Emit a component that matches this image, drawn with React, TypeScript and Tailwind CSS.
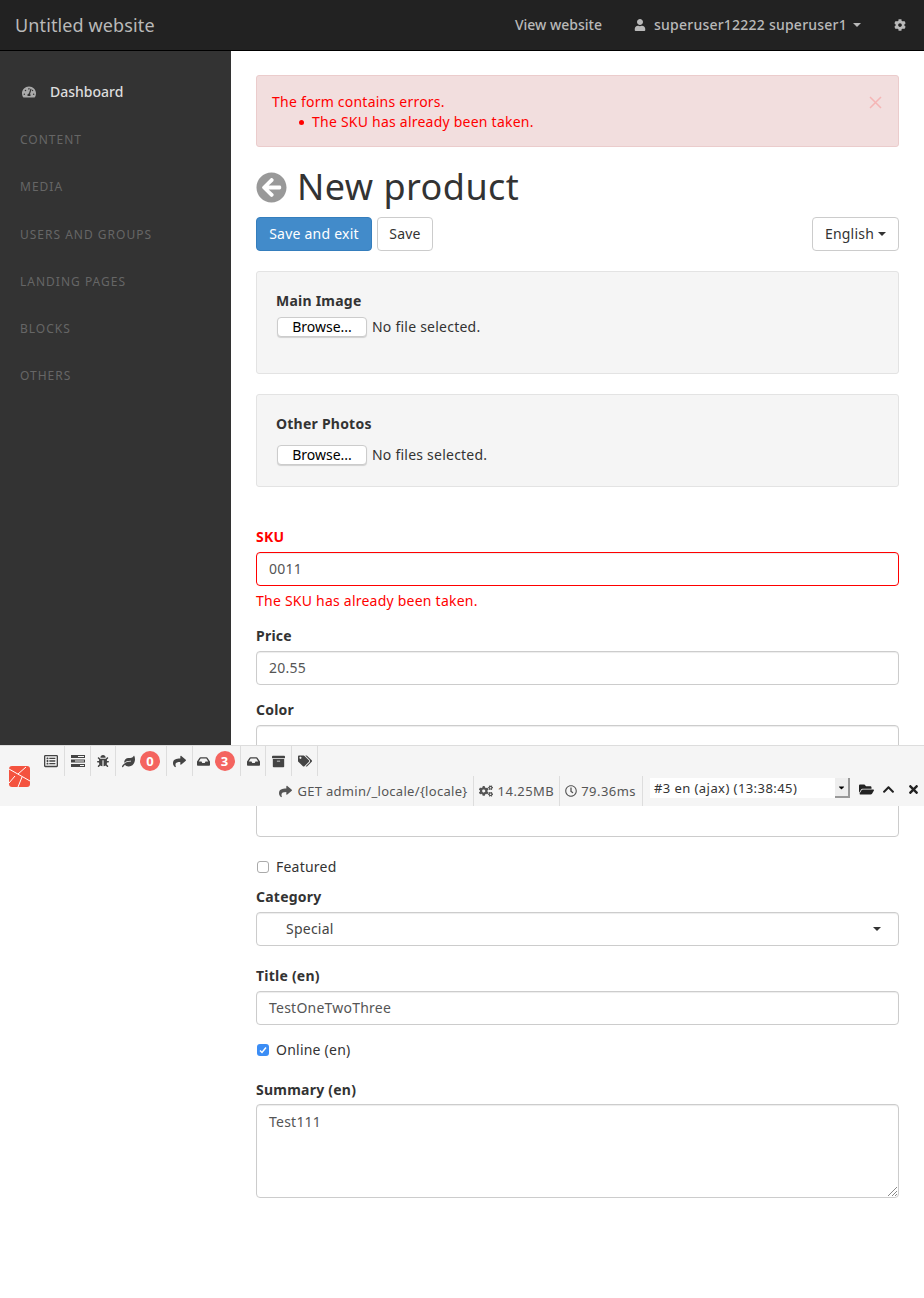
import {
  FaArchive,
  FaArrowCircleLeft,
  FaCaretDown,
  FaChevronUp,
  FaCog,
  FaCogs,
  FaFolderOpen,
  FaBug,
  FaInbox,
  FaLeaf,
  FaRegClock,
  FaRegListAlt,
  FaShare,
  FaTachometerAlt,
  FaTags,
  FaTimes,
  FaUser,
} from "react-icons/fa";

const sections = ["CONTENT", "MEDIA", "USERS AND GROUPS", "LANDING PAGES", "BLOCKS", "OTHERS"];

function Caret({ className }: { className: string }) {
  return <span className={`inline-block h-0 w-0 border-x-4 border-t-4 border-x-transparent ${className}`} />;
}

function Label({ children, danger }: { children: React.ReactNode; danger?: boolean }) {
  return (
    <label className={`mb-[5px] block h-5 font-bold leading-5 ${danger ? "text-[#f00]" : "text-[#333]"}`}>
      {children}
    </label>
  );
}

function TextField({ label, value }: { label: string; value: string }) {
  return (
    <div className="mb-[15px]">
      <Label>{label}</Label>
      <div className="flex h-[34px] items-center rounded border border-[#ccc] bg-white px-3 text-[#555] shadow-[inset_0_1px_1px_rgba(0,0,0,0.075)]">
        {value}
      </div>
    </div>
  );
}

function FileBox({ label, text, className, rowClass }: { label: string; text: string; className: string; rowClass: string }) {
  return (
    <div className={`rounded-[3px] border border-[#e3e3e3] bg-[#f5f5f5] px-[19px] pt-[19px] ${className}`}>
      <div className="h-5 font-bold leading-5 text-[#333]">{label}</div>
      <div className={`ml-px flex items-center gap-[5px] ${rowClass}`}>
        <span className="flex h-[20px] w-[90px] items-center justify-center rounded-[4px] border border-[#ccc] bg-white text-[14px] tracking-normal text-black shadow-[0_1px_1px_rgba(0,0,0,0.15)]">
          Browse...
        </span>
        <span className="text-[#333]">{text}</span>
      </div>
    </div>
  );
}

function BarItem({ children, className = "" }: { children: React.ReactNode; className?: string }) {
  return (
    <div className={`flex h-[30px] items-center justify-center border-r border-[#ddd] ${className}`}>{children}</div>
  );
}

function Badge({ n }: { n: number }) {
  return (
    <span className="ml-[5px] flex h-5 w-5 items-center justify-center rounded-full bg-[#f4645f] text-[13px] font-bold tracking-normal text-white">
      {n}
    </span>
  );
}

function DebugBar() {
  return (
    <div className="absolute left-0 right-0 top-[745px] z-10 h-[61px] border-t border-[#ddd] bg-[#f5f5f5] text-[13px] tracking-[0.3px] text-[#555]">
      <svg className="absolute left-[9px] top-[20px]" width="21" height="21" viewBox="0 0 21 21">
        <rect width="21" height="21" rx="3" fill="#f4533f" />
        <path d="M0 3 L21 15 M9 8 L17 1 M6 10 L0 17 M13 11 L9 21" stroke="#fff" strokeWidth="1" fill="none" />
      </svg>
      <div className="flex h-[30px] pl-[38px] text-[#444]">
        <BarItem className="w-[27px]">
          <FaRegListAlt size={14} />
        </BarItem>
        <BarItem className="w-[26px]">
          <svg width="14" height="12" viewBox="0 0 14 12" fill="currentColor">
            <path d="M0 0h14v3H0zM0 4.500h14v3H0zM0 9h14v3H0z" />
            <path d="M7 1h6v1H7zM4 5.500h9v1H4zM9 10h4v1H9z" fill="#f5f5f5" />
          </svg>
        </BarItem>
        <BarItem className="w-[25px]">
          <FaBug size={12} />
        </BarItem>
        <BarItem className="w-[51px]">
          <FaLeaf size={13} />
          <Badge n={0} />
        </BarItem>
        <BarItem className="w-[26px]">
          <FaShare size={13} />
        </BarItem>
        <BarItem className="w-[48px] pr-[2px]">
          <FaInbox size={13} />
          <Badge n={3} />
        </BarItem>
        <BarItem className="w-[25px]">
          <FaInbox size={13} />
        </BarItem>
        <BarItem className="w-[26px]">
          <FaArchive size={13} />
        </BarItem>
        <BarItem className="w-[26px]">
          <FaTags size={14} />
        </BarItem>
      </div>
      <div className="flex h-[30px] items-center justify-end">
        <div className="flex h-[30px] items-center gap-[5px] border-r border-[#ddd] pr-[5px]">
          <FaShare size={13} />
          <span>GET admin/_locale/&#123;locale&#125;</span>
        </div>
        <div className="flex h-[30px] items-center gap-[5px] border-r border-[#ddd] px-[5px] tracking-[0.45px]">
          <FaCogs size={14} />
          <span>14.25MB</span>
        </div>
        <div className="flex h-[30px] items-center gap-1 border-r border-[#ddd] pl-[5px] pr-[6px] tracking-[0.45px]">
          <FaRegClock size={12} />
          <span>79.36ms</span>
        </div>
        <div className="relative top-[-3px] ml-[7px] flex h-5 w-[200px] items-center justify-between bg-white pl-1 text-[13px] tracking-[0.43px] text-[#333]">
          #3 en (ajax) (13:38:45)
          <span className="flex h-5 w-[15px] items-center justify-center border-b-2 border-r-2 border-[#999] bg-[#eee]">
            <FaCaretDown size={9} className="text-black" />
          </span>
        </div>
        <div className="relative top-[-2px] flex w-[74px] items-center pl-[9px] text-[#222]">
          <FaFolderOpen size={15} />
          <FaChevronUp size={13} className="ml-2" />
          <FaTimes size={13} className="ml-3" />
        </div>
      </div>
    </div>
  );
}

export default function App() {
  return (
    <div className="relative min-h-[1298px] overflow-hidden bg-white font-['Noto_Sans',sans-serif] text-[14px] leading-5 tracking-[0.23px]">
      <header className="flex h-[51px] items-center justify-between border-b border-black bg-[#222] pl-[15px] pr-[18px] text-[#b9b9b9]">
        <span className="text-[18px] tracking-[0.12px]">Untitled website</span>
        <div className="flex items-center font-medium">
          <span className="tracking-normal">View website</span>
          <FaUser size={12} className="ml-[32px]" />
          <span className="ml-2">superuser12222 superuser1</span>
          <Caret className="ml-[6px] border-t-[#b9b9b9]" />
          <FaCog size={12} className="ml-[33px]" />
        </div>
      </header>

      <div className="flex">
        <aside className="h-[740px] w-[231px] shrink-0 bg-[#333] pt-[31px]">
          <div className="flex h-5 items-center pl-[22px] font-medium tracking-normal text-[#ddd]">
            <FaTachometerAlt size={14} className="text-[#aaa]" />
            <span className="ml-[14px]">Dashboard</span>
          </div>
          <ul className="mt-[28px] flex flex-col gap-[27.25px] pl-5 text-[12px] tracking-[1px] text-[#666]">
            {sections.map((s) => (
              <li key={s} className="h-5 leading-5">
                {s}
              </li>
            ))}
          </ul>
        </aside>

        <main className="min-w-0 flex-1 px-[25px] pt-6">
          <div className="relative mb-[16px] h-[72px] rounded-[3px] border border-[#ebcccc] bg-[#f2dede] pl-[15px] pt-[16px] text-[#f00]">
            <div>The form contains errors.</div>
            <div className="pl-[27px]">
              <span className="mr-[8px] inline-block h-[5px] w-[5px] -translate-y-[2px] rounded-full bg-[#f00]" />
              The SKU has already been taken.
            </div>
            <svg className="absolute right-4 top-5" width="13" height="13" viewBox="0 0 13 13" stroke="#f5b5b5" strokeWidth="1.500">
              <path d="M1 1 L12 12 M12 1 L1 12" />
            </svg>
          </div>

          <h1 className="mb-[6px] flex h-[48px] items-center text-[36px] font-normal tracking-[0.45px] text-[#333]">
            <FaArrowCircleLeft size={31} className="mr-[10px] text-[#999]" />
            New product
          </h1>

          <div className="flex h-[34px]">
            <button className="h-[34px] w-[116px] rounded-[4px] border border-[#357ebd] bg-[#428bca] text-white">
              Save and exit
            </button>
            <button className="ml-[5px] h-[34px] w-[56px] rounded-[4px] border border-[#ccc] bg-white text-[#333]">
              Save
            </button>
            <button className="ml-auto flex h-[34px] w-[87px] items-center justify-center rounded-[4px] border border-[#ccc] bg-white text-[#333]">
              English
              <Caret className="ml-1 border-t-[#333]" />
            </button>
          </div>

          <FileBox label="Main Image" text="No file selected." className="mt-5 h-[103px]" rowClass="mt-[6px]" />
          <FileBox label="Other Photos" text="No files selected." className="mt-5 h-[93px]" rowClass="mt-[11px]" />

          <div className="mt-10">
            <div className="mb-[5px]">
              <Label danger>SKU</Label>
              <div className="flex h-[34px] items-center rounded border border-[#f00] bg-white px-3 text-[#555] shadow-[inset_0_1px_1px_rgba(0,0,0,0.075)]">
                0011
              </div>
              <div className="mt-[5px] mb-[15px] h-5 text-[#f00]">The SKU has already been taken.</div>
            </div>
            <TextField label="Price" value="20.55" />
            <TextField label="Color" value="" />
            <div className="mb-[24px] h-[59px] pt-[25px]">
              <div className="h-[38px] rounded border border-[#ccc] bg-white" />
            </div>

            <label className="mb-[10px] flex h-5 items-center">
              <span className="ml-px h-[12px] w-[12px] rounded-[3px] border border-[#aaa] bg-white" />
              <span className="ml-[7px] text-[#333]">Featured</span>
            </label>

            <div className="mb-[20px]">
              <Label>Category</Label>
              <div className="flex h-[34px] items-center justify-between rounded border border-[#ccc] bg-white pl-[29px] pr-[17px] text-[#444] shadow-[inset_0_1px_1px_rgba(0,0,0,0.075)]">
                Special
                <Caret className="border-t-[#333]" />
              </div>
            </div>

            <TextField label="Title (en)" value="TestOneTwoThree" />

            <label className="mb-[20px] flex h-5 items-center">
              <span className="ml-px flex h-[12px] w-[12px] items-center justify-center rounded-[3px] bg-[#3b8df5]">
                <svg width="8" height="8" viewBox="0 0 8 8" fill="none" stroke="#fff" strokeWidth="1.500">
                  <path d="M1 4.500 L3 6.500 L7 1.500" />
                </svg>
              </span>
              <span className="ml-[7px] text-[#333]">Online (en)</span>
            </label>

            <label className="mb-1 block h-5 font-bold leading-5 text-[#333]">Summary (en)</label>
            <div className="relative h-[94px] rounded border border-[#ccc] bg-white px-3 py-[7px] text-[#555] shadow-[inset_0_1px_1px_rgba(0,0,0,0.075)]">
              Test111
              <svg className="absolute bottom-0 right-0" width="11" height="11" viewBox="0 0 11 11" stroke="#888" strokeWidth="1">
                <path d="M1 10 L10 1 M5 10 L10 5 M8 10 L10 8" />
              </svg>
            </div>
          </div>
        </main>
      </div>

      <DebugBar />
    </div>
  );
}
